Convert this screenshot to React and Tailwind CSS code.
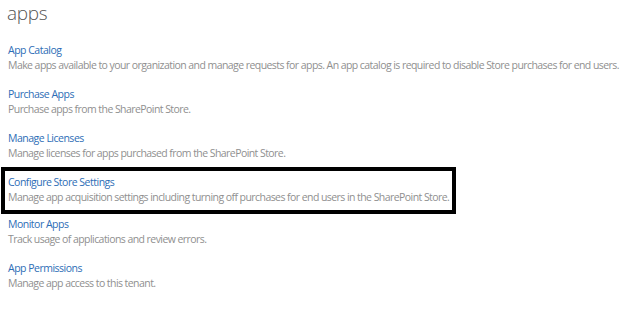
const items = [
  {
    title: 'App Catalog',
    desc: 'Make apps available to your organization and manage requests for apps. An app catalog is required to disable Store purchases for end users.',
  },
  { title: 'Purchase Apps', desc: 'Purchase apps from the SharePoint Store.' },
  { title: 'Manage Licenses', desc: 'Manage licenses for apps purchased from the SharePoint Store.' },
];

const after = [
  { title: 'Monitor Apps', desc: 'Track usage of applications and review errors.' },
  { title: 'App Permissions', desc: 'Manage app access to this tenant.' },
];

const Item = ({ title, desc }) => (
  <div className="flex flex-col">
    <a href="#" className="text-[10.5px] leading-[15px] text-[#2d6db6] tracking-[-0.5px]">
      {title}
    </a>
    <div className="text-[10.5px] leading-[15px] text-[#8f8f8f] tracking-[-0.56px] whitespace-nowrap">{desc}</div>
  </div>
);

export default function App() {
  return (
    <div className="w-[623px] h-[333px] bg-white overflow-hidden font-['Open_Sans',sans-serif]">
      <div className="pl-[7px] pt-[1px] text-[19px] leading-[24px] font-light text-[#555] tracking-[-0.3px]">apps</div>
      <div className="flex flex-col pl-[8px] mt-[18px] gap-[14px]">
        {items.map((it) => (
          <Item key={it.title} {...it} />
        ))}
      </div>
      <div className="ml-[1px] mt-[6px] w-[455px] border-[4px] border-black pl-[3px] pt-[4px] pb-[5px]">
        <Item
          title="Configure Store Settings"
          desc="Manage app acquisition settings including turning off purchases for end users in the SharePoint Store."
        />
      </div>
      <div className="flex flex-col pl-[8px] mt-[3px] gap-[14px]">
        {after.map((it) => (
          <Item key={it.title} {...it} />
        ))}
      </div>
    </div>
  );
}
